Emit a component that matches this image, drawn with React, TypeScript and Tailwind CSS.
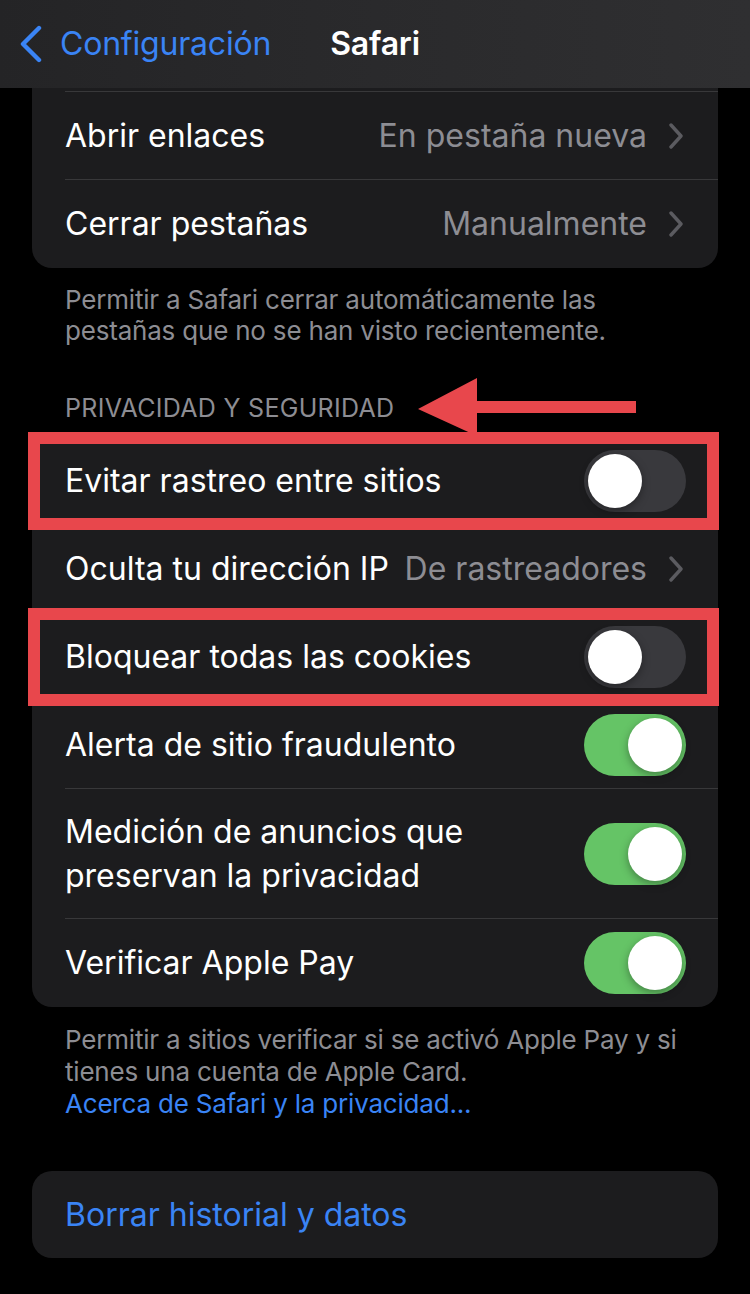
import React from "react";

const FONT = { fontFamily: "Inter, 'Noto Sans', 'Liberation Sans', sans-serif" };

function Toggle({ on }: { on: boolean }) {
  return (
    <div
      className={`relative h-[62px] w-[102px] shrink-0 rounded-full ${
        on ? "bg-[#65c466]" : "bg-[#39393d]"
      }`}
    >
      <div
        className={`absolute top-[4px] h-[54px] w-[54px] rounded-full bg-white shadow-[0_3px_8px_rgba(0,0,0,0.35)] ${
          on ? "right-[4px]" : "left-[4px]"
        }`}
      />
    </div>
  );
}

function Chevron() {
  return (
    <svg width="14" height="26" viewBox="0 0 14 26" className="ml-[22px] shrink-0">
      <path d="M2 2 L12 13 L2 24" fill="none" stroke="#5b5b60" strokeWidth="3.4" strokeLinecap="round" strokeLinejoin="round" />
    </svg>
  );
}

function Highlight() {
  return <div className="pointer-events-none absolute -top-[5px] -bottom-[5px] -left-[4px] -right-[1px] border-[12px] border-[#e8474c]" />;
}

type RowProps = {
  label: React.ReactNode;
  value?: string;
  toggle?: boolean;
  last?: boolean;
  marked?: boolean;
  tall?: boolean;
};

function Row({ label, value, toggle, last, marked, tall }: RowProps) {
  return (
    <div className="relative pl-[33px]">
      <div
        className={`flex items-center pr-[32px] ${tall ? "h-[130px]" : "h-[88px]"} ${
          last ? "" : "border-b border-[#38383a]"
        }`}
      >
        <div className="flex-1 text-[32px] leading-[44px] tracking-[0px] text-white">{label}</div>
        {value !== undefined && (
          <div className="flex items-center pr-[3px]">
            <span className="text-[32px] tracking-[0px] text-[#8d8d93]">{value}</span>
            <Chevron />
          </div>
        )}
        {toggle !== undefined && <Toggle on={toggle} />}
      </div>
      {marked && <Highlight />}
    </div>
  );
}

export default function App() {
  return (
    <div className="min-h-[1294px] w-[750px] overflow-hidden bg-black" style={FONT}>
      {/* nav bar */}
      <div className="relative flex h-[88px] items-center bg-gradient-to-r from-[#242426] via-[#2a2a2c] to-[#2f2f31]">
        <div className="flex items-center pl-[19px]">
          <svg width="24" height="38" viewBox="0 0 24 38">
            <path d="M20 3 L4 19 L20 35" fill="none" stroke="#3a84f5" strokeWidth="4.4" strokeLinecap="round" strokeLinejoin="round" />
          </svg>
          <span className="ml-[17px] text-[32px] tracking-[-0.2px] text-[#3a84f5]">Configuración</span>
        </div>
        <span className="absolute left-1/2 -translate-x-1/2 text-[32px] font-semibold tracking-[-0.2px] text-white">Safari</span>
      </div>

      {/* tabs group, scrolled under the bar */}
      <div className="mx-[32px] rounded-b-[20px] bg-[#1c1c1e]">
        <div className="h-[4px] pl-[33px]">
          <div className="h-full border-b border-[#38383a]" />
        </div>
        <Row label="Abrir enlaces" value="En pestaña nueva" />
        <Row label="Cerrar pestañas" value="Manualmente" last />
      </div>
      <p className="px-[65px] pt-[16px] text-[26px] leading-[31px] tracking-[-0.2px] text-[#8d8d93]">
        Permitir a Safari cerrar automáticamente las pestañas que no se han visto recientemente.
      </p>

      {/* privacy */}
      <div className="relative mt-[46px] h-[32px] px-[65px] text-[25px] leading-[32px] tracking-[0.3px] text-[#8d8d93]">
        PRIVACIDAD Y SEGURIDAD
        <svg width="222" height="60" viewBox="0 0 222 60" className="absolute left-[416px] top-[-14px]">
          <polygon points="2,31 61,0 61,23 220,23 220,35 61,35 61,58" fill="#e8474c" />
        </svg>
      </div>
      <div className="mx-[32px] mt-[13px] rounded-[20px] bg-[#1c1c1e]">
        <Row label="Evitar rastreo entre sitios" toggle={false} marked />
        <Row label="Oculta tu dirección IP" value="De rastreadores" />
        <Row label="Bloquear todas las cookies" toggle={false} marked />
        <Row label="Alerta de sitio fraudulento" toggle={true} />
        <Row
          tall
          label={
            <>
              Medición de anuncios que
              <br />
              preservan la privacidad
            </>
          }
          toggle={true}
        />
        <Row label="Verificar Apple Pay" toggle={true} last />
      </div>
      <div className="px-[65px] pt-[17px] text-[26px] leading-[32px] tracking-[-0.2px]">
        <p className="text-[#8d8d93]">
          Permitir a sitios verificar si se activó Apple Pay y si tienes una cuenta de Apple Card.
        </p>
        <p className="text-[#3a84f5]">Acerca de Safari y la privacidad...</p>
      </div>

      {/* history */}
      <div className="mx-[32px] mt-[51px] flex h-[87px] items-center rounded-[20px] bg-[#1c1c1e] pl-[33px]">
        <span className="text-[32px] tracking-[0px] text-[#3a84f5]">Borrar historial y datos</span>
      </div>
    </div>
  );
}
